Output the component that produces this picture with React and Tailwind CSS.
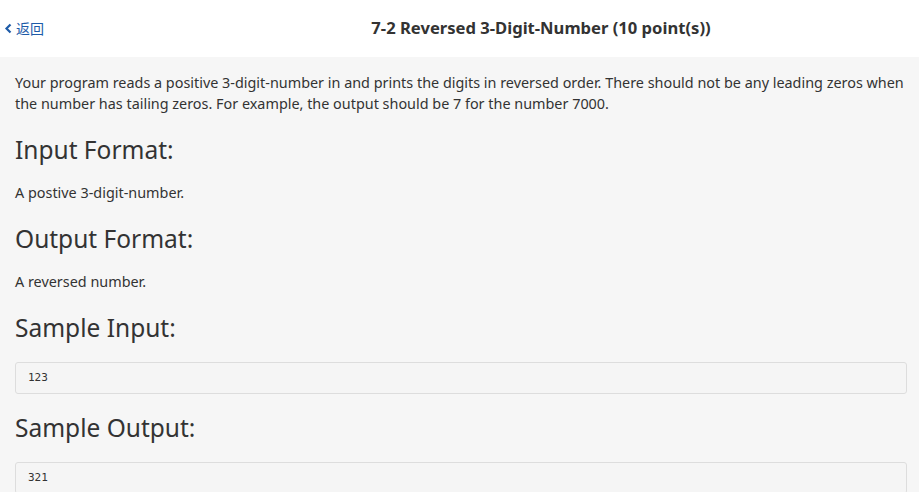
import React from 'react';

const sections = [
  { title: 'Input Format:', text: 'A postive 3-digit-number.' },
  { title: 'Output Format:', text: 'A reversed number.' },
  { title: 'Sample Input:', code: '123' },
  { title: 'Sample Output:', code: '321' },
];

function App() {
  return (
    <div
      className="min-h-screen bg-[#f6f6f6] text-[#333]"
      style={{ fontFamily: '"Noto Sans", "Noto Sans CJK SC", sans-serif' }}
    >
      {/* header */}
      <div className="flex h-[57px] items-center bg-white">
        <a href="#" className="flex w-[163px] items-center pl-[4px] text-[14px] text-[#1e5ba8]">
          <svg width="9" height="11" viewBox="0 0 9 11" className="mr-[3px]">
            <path d="M6.5 1.5 L2.5 5.5 L6.5 9.5" fill="none" stroke="#1e5ba8" strokeWidth="2.2" />
          </svg>
          返回
        </a>
        <h1 className="flex-1 text-center text-[16.6px] font-bold text-[#333]">
          7-2 Reversed 3-Digit-Number (10 point(s))
        </h1>
      </div>

      {/* content */}
      <div className="pl-[15px] pr-[12px] pt-[15px]">
        <p className="text-[14.4px] leading-[21px]">
          Your program reads a positive 3-digit-number in and prints the digits in reversed order. There should not be any leading zeros when the number has tailing zeros. For example, the output should be 7 for the number 7000.
        </p>
        {sections.map((s) => (
          <div key={s.title}>
            <h2 className="mt-[20px] mb-[16px] text-[24.5px] leading-[32px] font-normal">{s.title}</h2>
            {s.text && <p className="text-[14.4px] leading-[21px]">{s.text}</p>}
            {s.code && (
              <pre
                className="mt-[18px] mb-[-2px] h-[32px] rounded-[3px] border border-[#ddd] bg-[#f5f5f5] px-[12px] text-[11px] leading-[30px]"
                style={{ fontFamily: '"DejaVu Sans Mono", monospace' }}
              >
                {s.code}
              </pre>
            )}
          </div>
        ))}
      </div>
    </div>
  );
}

export default App;
